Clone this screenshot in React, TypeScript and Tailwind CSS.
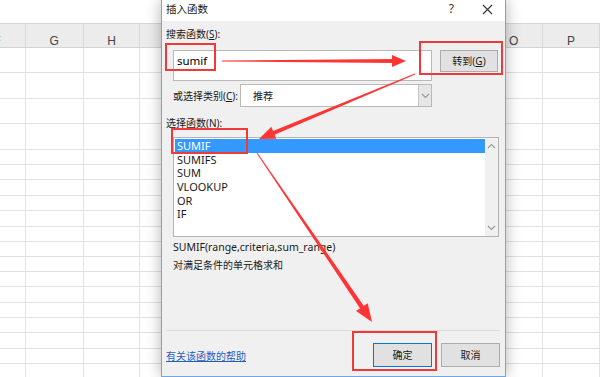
import React from 'react';

const FONT = "font-['Noto_Sans','Noto_Sans_CJK_SC',sans-serif]";

const COLS = [
  { w: 'w-[58px]', l: 'F' },
  { w: 'w-[59px]', l: 'G' },
  { w: 'w-[58px]', l: 'H' },
  { w: 'w-[59px]', l: 'I' },
  { w: 'w-[58px]', l: 'J' },
  { w: 'w-[59px]', l: 'K' },
  { w: 'w-[59px]', l: 'L' },
  { w: 'w-[58px]', l: 'M' },
  { w: 'w-[59px]', l: 'N' },
  { w: 'w-[59px]', l: 'O' },
  { w: 'w-[58px]', l: 'P' },
];

const ROWS = [
  'h-[25px]', 'h-[26px]', 'h-[25px]', 'h-[26px]',
  'h-[15px]', 'h-[15px]', 'h-[16px]', 'h-[15px]', 'h-[16px]', 'h-[15px]',
  'h-[15px]', 'h-[15px]', 'h-[15px]', 'h-[16px]', 'h-[15px]', 'h-[15px]',
  'h-[16px]', 'h-[15px]', 'h-[15px]',
];

const FUNCS = ['SUMIF', 'SUMIFS', 'SUM', 'VLOOKUP', 'OR', 'IF'];

// tapered arrow: thin tail, thick end, triangle head
function arrow(x1: number, y1: number, x2: number, y2: number, w0: number, w1: number, hl: number, hw: number) {
  const dx = x2 - x1, dy = y2 - y1;
  const L = Math.hypot(dx, dy);
  const ux = dx / L, uy = dy / L;
  const px = -uy, py = ux;
  const bx = x2 - ux * hl, by = y2 - uy * hl;
  const ex = bx + ux * 2, ey = by + uy * 2;
  const f = (a: number, b: number) => `${a.toFixed(1)},${b.toFixed(1)}`;
  const shaft = [
    f(x1 + (px * w0) / 2, y1 + (py * w0) / 2),
    f(ex + (px * w1) / 2, ey + (py * w1) / 2),
    f(ex - (px * w1) / 2, ey - (py * w1) / 2),
    f(x1 - (px * w0) / 2, y1 - (py * w0) / 2),
  ].join(' ');
  const head = [
    f(bx + (px * hw) / 2, by + (py * hw) / 2),
    f(x2, y2),
    f(bx - (px * hw) / 2, by - (py * hw) / 2),
  ].join(' ');
  return { shaft, head };
}

const ARROWS = [
  arrow(222, 61, 406, 61, 1, 4, 14, 12),
  arrow(415, 74, 259, 139, 1, 4, 16, 13),
  arrow(257, 153, 372, 322, 1, 4.5, 18, 14),
];

function Chevron({ up }: { up?: boolean }) {
  return (
    <svg width="9" height="6" viewBox="0 0 9 6">
      <path d={up ? 'M1 5 L4.5 1.5 L8 5' : 'M1 1 L4.5 4.5 L8 1'} fill="none" stroke="#9a9a9a" strokeWidth="1.2" />
    </svg>
  );
}

function Sheet() {
  return (
    <div className="flex flex-col -ml-[31px] w-[631px]">
      <div className="h-[24px] bg-white border-b border-[#d6d6d6]" />
      <div className="h-[24px] bg-[#ececec] flex border-b border-[#d4d4d4]">
        {COLS.map((c) => (
          <div key={c.l} className={`${c.w} flex items-end justify-center pb-[1px] border-r border-[#d9d9d9] text-[12px] leading-[10px] text-[#444] font-['Liberation_Sans',sans-serif]`}>
            {c.l}
          </div>
        ))}
      </div>
      {ROWS.map((h, i) => (
        <div key={i} className={`${h} flex border-b border-[#e2e2e2] bg-white`}>
          {COLS.map((c) => (
            <div key={c.l} className={`${c.w} border-r border-[#e2e2e2]`} />
          ))}
        </div>
      ))}
    </div>
  );
}

function Dialog() {
  return (
    <div className={`absolute left-[161px] top-0 w-[345px] h-[377px] bg-[#f0f0f0] border-x border-b border-[#6fa7de] shadow-[0_0_14px_rgba(0,0,0,0.3)] flex flex-col text-[10px] text-[#1a1a1a] ${FONT}`}>
      <div className="h-[21px] bg-white flex items-center pl-[4px] pr-[9px] shrink-0">
        <span className="leading-[14px] -mt-[3px] text-[10.5px]">插入函数</span>
        <span className="ml-auto mr-[28px] -mt-[3px] text-[12px] text-[#333]">?</span>
        <svg width="11" height="11" viewBox="0 0 11 11" className="-mt-[3px] mr-[3px]">
          <path d="M1 1 L10 10 M10 1 L1 10" stroke="#333" strokeWidth="1.1" />
        </svg>
      </div>

      <div className="mt-[6px] ml-[4px] h-[14px] leading-[14px] whitespace-nowrap">
        搜索函数(<span className="underline">S</span>):
      </div>

      <div className="mt-[9px] ml-[11px] flex items-start gap-[8px]">
        <div className="w-[259px] h-[31px] bg-white border border-[#b9b9b9] pl-[3px] pt-[3px] leading-[14px] text-[11.5px] text-black">
          sumif
        </div>
        <div className="w-[58px] h-[22px] bg-[#e1e1e1] border border-[#adadad] flex items-center justify-center leading-[14px] whitespace-nowrap">
          转到(<span className="underline">G</span>)
        </div>
      </div>

      <div className="mt-[3px] ml-[11px] flex items-center">
        <span className="w-[67px] leading-[14px] whitespace-nowrap">
          或选择类别(<span className="underline">C</span>):
        </span>
        <div className="w-[192px] h-[23px] bg-white border border-[#b9b9b9] flex items-center">
          <span className="pl-[12px] leading-[14px]">推荐</span>
          <div className="ml-auto w-[13px] h-full bg-[#e6e6e6] border-l border-[#c4c4c4] flex items-center justify-center">
            <Chevron />
          </div>
        </div>
      </div>

      <div className="mt-[9px] ml-[4px] h-[14px] leading-[14px] whitespace-nowrap">
        选择函数(<span className="underline">N</span>):
      </div>

      <div className="mt-[7px] ml-[11px] w-[326px] h-[100px] bg-white border border-[#b4b4b4] flex">
        <div className="flex-1 pt-[1px] pl-[1px]">
          {FUNCS.map((f, i) => (
            <div
              key={f}
              className={`h-[13.7px] leading-[13.7px] pl-[2px] text-[11px] ${i === 0 ? 'bg-[#3399ff] text-white' : 'text-[#1a1a1a]'}`}
            >
              {f}
            </div>
          ))}
        </div>
        <div className="w-[13px] bg-[#f0f0f0] flex flex-col items-center justify-between py-[5px]">
          <Chevron up />
          <Chevron />
        </div>
      </div>

      <div className="mt-[3px] ml-[11px] h-[14px] leading-[14px] text-[10.5px]">SUMIF(range,criteria,sum_range)</div>
      <div className="mt-[4px] ml-[11px] h-[14px] leading-[14px]">对满足条件的单元格求和</div>

      <div className="mt-[58px] ml-[4px] w-[334px] border-t border-[#dcdcdc]" />

      <div className="mt-[12px] ml-[4px] flex items-center">
        <span className="text-[#1f5fbf] underline leading-[14px] mt-[1px]">有关该函数的帮助</span>
        <div className="ml-auto mr-[5px] flex gap-[9px]">
          <div className="w-[59px] h-[24px] bg-[#e1e1e1] border-[1.5px] border-[#0078d7] flex items-center justify-center leading-[14px]">
            确定
          </div>
          <div className="w-[59px] h-[24px] bg-[#e1e1e1] border border-[#adadad] flex items-center justify-center leading-[14px]">
            取消
          </div>
        </div>
      </div>
    </div>
  );
}

function Annotations() {
  return (
    <>
      <div className="absolute left-[165px] top-[43px] w-[51px] h-[28px] border-2 border-[#f03a3a]" />
      <div className="absolute left-[419px] top-[41px] w-[84px] h-[34px] border-2 border-[#f03a3a]" />
      <div className="absolute left-[171px] top-[128px] w-[77px] h-[26px] border-2 border-[#f03a3a]" />
      <div className="absolute left-[352px] top-[331px] w-[85px] h-[40px] border-2 border-[#f03a3a]" />
      <svg className="absolute inset-0 pointer-events-none" width="600" height="377" viewBox="0 0 600 377">
        {ARROWS.map((a, i) => (
          <g key={i} fill="#ff3535">
            <polygon points={a.shaft} />
            <polygon points={a.head} />
          </g>
        ))}
      </svg>
    </>
  );
}

export default function App() {
  return (
    <div className="relative w-[600px] h-[377px] overflow-hidden bg-white">
      <Sheet />
      <Dialog />
      <Annotations />
    </div>
  );
}
